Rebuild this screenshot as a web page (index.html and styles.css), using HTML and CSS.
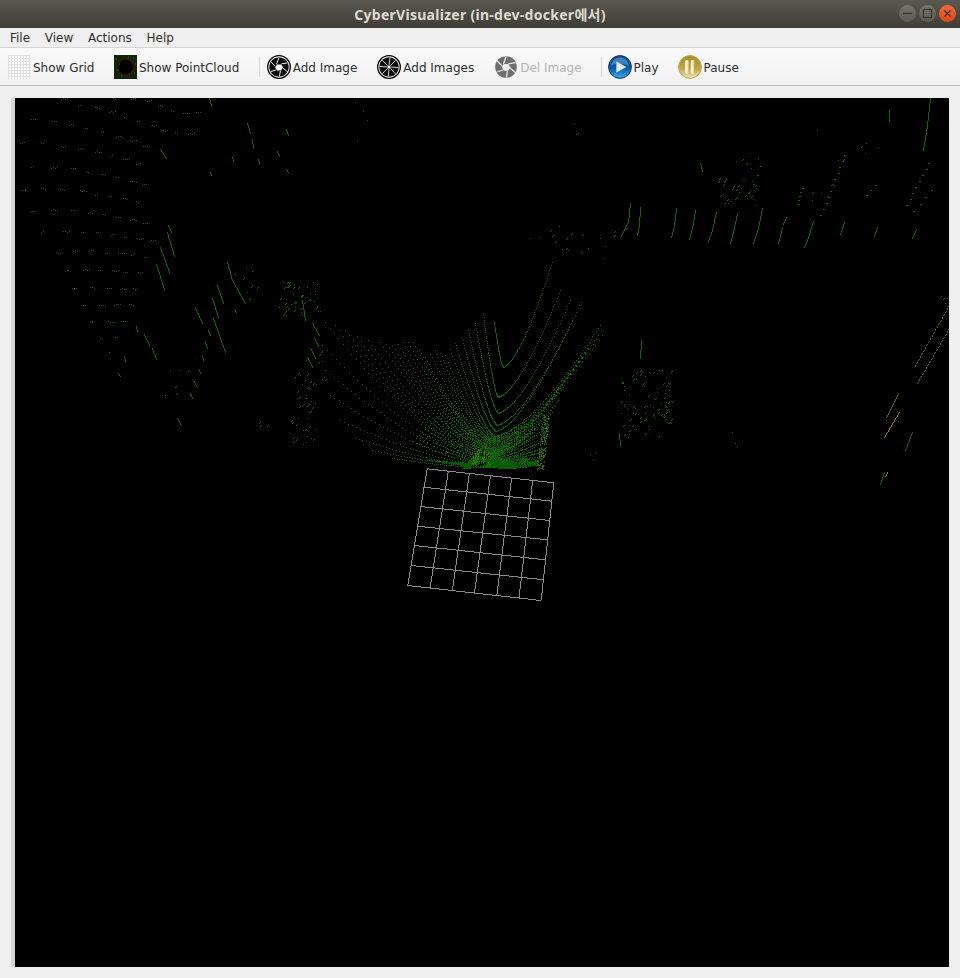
FILE: index.html
```html
<!DOCTYPE html>
<html lang="en">
<head>
    <meta charset="UTF-8">
    <title>CyberVisualizer</title>
    <link rel="stylesheet" href="styles.css">
</head>
<body>
    <div class="titlebar">
        <span class="title">CyberVisualizer (in-dev-docker에서)</span>
        <div class="window-buttons">
            <span class="win-btn">
                <svg width="17" height="17" viewBox="0 0 17 17"><path d="M4 8.5h9" stroke="#35342f" stroke-width="1.2"/></svg>
            </span>
            <span class="win-btn">
                <svg width="17" height="17" viewBox="0 0 17 17"><rect x="4.5" y="4.5" width="8" height="8" fill="none" stroke="#35342f" stroke-width="1.1"/></svg>
            </span>
            <span class="win-btn close">
                <svg width="17" height="17" viewBox="0 0 17 17"><path d="M5.5 5.5l6 6M11.5 5.5l-6 6" stroke="#3a2418" stroke-width="1.2"/></svg>
            </span>
        </div>
    </div>

    <div class="menubar">
        <span class="menu-item">File</span>
        <span class="menu-item">View</span>
        <span class="menu-item">Actions</span>
        <span class="menu-item">Help</span>
    </div>

    <div class="toolbar">
        <div class="tool first">
            <svg class="icon narrow" width="23" height="24" viewBox="0 0 23 24">
                <defs>
                    <pattern id="gridcell" width="3" height="3" patternUnits="userSpaceOnUse">
                        <rect width="3" height="3" fill="#fbfbfb"/>
                        <path d="M0 .5h3M.5 0v3" stroke="#e0e0e0" stroke-width="1"/>
                    </pattern>
                </defs>
                <rect width="23" height="24" fill="url(#gridcell)"/>
            </svg>
            <span>Show Grid</span>
        </div>
        <div class="tool">
            <svg class="icon narrow" width="23" height="24" viewBox="0 0 23 24">
                <defs>
                    <radialGradient id="cloud">
                        <stop offset="0" stop-color="#000"/>
                        <stop offset=".42" stop-color="#000"/>
                        <stop offset=".55" stop-color="#2e1c08"/>
                        <stop offset=".75" stop-color="#0c2408"/>
                        <stop offset="1" stop-color="#0c2a0a"/>
                    </radialGradient>
                </defs>
                <rect width="23" height="24" fill="#0a1c08"/>
                <circle cx="11.5" cy="12" r="15" fill="url(#cloud)"/>
                <path d="M2 4h1M5 9h1M3 15h1M19 3h1M21 9h1M20 18h1M7 21h1M14 2h1" stroke="#2c6a20" stroke-width="1"/>
            </svg>
            <span>Show PointCloud</span>
        </div>
        <div class="tool-sep first"></div>
        <div class="tool">
            <svg class="icon" width="24" height="24" viewBox="0 0 24 24">
                <circle cx="12" cy="12" r="11.3" fill="#fff" stroke="#000" stroke-width="1.3"/>
                <circle cx="12" cy="12" r="9.8" fill="#0c0c0c"/>
                <path d="M9.5 9L12 2.6M14.5 8.8L20.5 8M16 13L21 17.2M13.4 16L12.4 21.4M9 15L3.6 16.6M8.2 11L3.8 6.8" stroke="#fff" stroke-width=".9" fill="none"/>
                <path d="M9.8 9.4h4.4l1.8 3-2 3H10l-1.8-3z" fill="#fff"/>
            </svg>
            <span>Add Image</span>
        </div>
        <div class="tool">
            <svg class="icon" width="24" height="24" viewBox="0 0 24 24">
                <circle cx="12" cy="12" r="11.3" fill="#fff" stroke="#000" stroke-width="1.3"/>
                <circle cx="12" cy="12" r="9.8" fill="#0c0c0c"/>
                <path d="M12 10.5L13 2.5M13.2 10.9L18.7 5.2M13.5 12L21.5 12.6M13 13.1L18.6 18.8M12 13.5L11.2 21.5M10.9 13.1L5.3 18.7M10.5 12L2.5 11.4M10.9 10.9L5.2 5.3" stroke="#fff" stroke-width=".8" fill="none"/>
                <circle cx="12" cy="12" r="1.3" fill="#fff"/>
            </svg>
            <span>Add Images</span>
        </div>
        <div class="tool disabled tight">
            <svg class="icon" width="24" height="24" viewBox="0 0 24 24">
                <circle cx="12" cy="12" r="10.8" fill="#6e6e6e"/>
                <path d="M9.5 9L12 1.5M14.5 8.8L21.5 7.6M16 13L22 18M13.4 16L12.4 22.5M9 15L2.6 17M8.2 11L3 5.8" stroke="#e6e6e6" stroke-width="1.3" fill="none"/>
                <path d="M9.6 9h4.8l2 3.4-2.2 3.4H9.8L7.8 12.2z" fill="#ececec"/>
            </svg>
            <span>Del Image</span>
        </div>
        <div class="tool-sep"></div>
        <div class="tool tight">
            <svg class="icon" width="24" height="24" viewBox="0 0 24 24">
                <defs>
                    <linearGradient id="playfill" x1="0" y1="0" x2="0" y2="1">
                        <stop offset="0" stop-color="#0a4a90"/>
                        <stop offset=".55" stop-color="#0b5aa6"/>
                        <stop offset="1" stop-color="#38b0e8"/>
                    </linearGradient>
                </defs>
                <circle cx="12" cy="12" r="11.4" fill="url(#playfill)" stroke="#16326e" stroke-width="1"/>
                <path d="M3 10.5C4 5 8 2.4 12 2.4s8 2.6 9 8.1c-5-2.4-13-2.4-18 0z" fill="#6fa8d8" opacity=".55"/>
                <path d="M8.4 6.4L18.4 12 8.4 17.6z" fill="#dcebf8"/>
            </svg>
            <span>Play</span>
        </div>
        <div class="tool">
            <svg class="icon" width="24" height="24" viewBox="0 0 24 24">
                <defs>
                    <linearGradient id="pausefill" x1="0" y1="0" x2="0" y2="1">
                        <stop offset="0" stop-color="#a88e24"/>
                        <stop offset=".55" stop-color="#bda544"/>
                        <stop offset="1" stop-color="#efe6b8"/>
                    </linearGradient>
                    <linearGradient id="pausebar" x1="0" y1="0" x2="1" y2="0">
                        <stop offset="0" stop-color="#fffdf2"/>
                        <stop offset=".55" stop-color="#f2eac4"/>
                        <stop offset="1" stop-color="#b9a140"/>
                    </linearGradient>
                </defs>
                <circle cx="12" cy="12" r="11.4" fill="url(#pausefill)" stroke="#bfa94e" stroke-width="1"/>
                <rect x="7.2" y="5" width="4" height="14" rx="2" fill="url(#pausebar)"/>
                <rect x="12.8" y="5" width="4" height="14" rx="2" fill="url(#pausebar)"/>
            </svg>
            <span>Pause</span>
        </div>
    </div>

    <div class="content">
        <canvas id="view" width="934" height="869"></canvas>
    </div>

    <script src="script.js"></script>
</body>
</html>
```

FILE: styles.css
```css
html, body {
    margin: 0;
    padding: 0;
}
body {
    width: 960px;
    height: 978px;
    overflow: hidden;
    background-color: #efefef;
    font-family: "DejaVu Sans", sans-serif;
    font-size: 12px;
    color: #2e2e2e;
}
.titlebar {
    position: relative;
    height: 28px;
    display: flex;
    align-items: center;
    justify-content: center;
    background: linear-gradient(#5b5850, #3f3d37);
}
.title {
    font-family: "Noto Sans", "Noto Sans CJK KR", sans-serif;
    font-size: 14px;
    font-weight: 700;
    letter-spacing: .28px;
    color: #dfdbd2;
}
.window-buttons {
    position: absolute;
    top: 5px;
    right: 4px;
    display: flex;
    gap: 3px;
}
.win-btn {
    width: 17px;
    height: 17px;
    border-radius: 50%;
    background: linear-gradient(#74736c, #5a5953);
    display: block;
}
.win-btn svg {
    display: block;
}
.win-btn.close {
    background: linear-gradient(#f0693a, #dd4814);
}
.menubar {
    height: 19px;
    display: flex;
    align-items: center;
    padding-left: 10px;
    gap: 14.7px;
    background-color: #efefef;
    border-bottom: 1px solid #d6d6d6;
}
.toolbar {
    height: 36px;
    padding-top: 1px;
    display: flex;
    align-items: center;
    padding-left: 8px;
    background: linear-gradient(#f9f9f9, #f1f1f1);
    border-bottom: 1px solid #bcbcbc;
}
.tool {
    display: flex;
    align-items: center;
    gap: 2px;
    margin-right: 20px;
}
.tool span {
    margin-top: 2px;
}
.tool.first {
    margin-right: 19.6px;
}
.tool.tight {
    margin-right: 19px;
}
.tool.disabled {
    color: #b4b4b4;
}
.icon {
    display: block;
    flex: none;
}
.tool-sep {
    width: 1px;
    height: 20px;
    margin-right: 6px;
    background-color: #d8d8d8;
}
.tool-sep.first {
    margin-right: 6.4px;
}
.content {
    padding: 12px 11px 11px 11px;
}
#view {
    display: block;
    border-left: 4px solid #d6d6d6;
    background-color: #000;
}
```

FILE: script.js
```js
// point cloud + grid view, drawn pixel by pixel so the points stay hard edged
var canvas = document.getElementById('view');
var ctx = canvas.getContext('2d');
var OX = 15, OY = 98;

var GREEN = '#0d6a00';
var DARK = '#0a5c00';
var OLIVE = '#4f6a0c';
var ORANGE = '#a87a10';

var seed = 12345;
function rnd() {
    seed = (seed * 16807) % 2147483647;
    return seed / 2147483647;
}

function dot(x, y, color) {
    ctx.fillStyle = color || GREEN;
    ctx.fillRect(Math.round(x) - OX, Math.round(y) - OY, 1, 1);
}

function line(x0, y0, x1, y1, color, gapEvery) {
    var n = Math.max(Math.abs(x1 - x0), Math.abs(y1 - y0));
    for (var i = 0; i <= n; i++) {
        if (gapEvery && i % gapEvery === gapEvery - 1) continue;
        var t = n ? i / n : 0;
        dot(x0 + (x1 - x0) * t, y0 + (y1 - y0) * t, color);
    }
}

// main fan: vertex x, vertex y, left end x, y, right end x, y
var rings = [
    [503, 367, 494, 322, 552, 262],
    [498, 397, 483, 313, 560, 290],
    [498, 413, 475, 323, 570, 300],
    [497, 425, 468, 330, 581, 302],
    [496, 431, 462, 338, 572, 320],
    [495, 436, 455, 343, 600, 325],
    [495, 440, 445, 355, 602, 335],
    [494, 443, 435, 350, 590, 343],
    [493, 447, 425, 357, 585, 353],
    [493, 450, 413, 342, 578, 362],
    [492, 452, 403, 342, 568, 373],
    [492, 454, 392, 345, 558, 400],
    [491, 456, 380, 342, 552, 412],
    [490, 457, 368, 340, 548, 425],
    [490, 458, 357, 336, 545, 440],
    [489, 459, 345, 330, 544, 448],
    [488, 460, 335, 325, 543, 452],
    [488, 461, 325, 322, 542, 456],
    [487, 462, 322, 345, 541, 458],
    [486, 463, 325, 370, 540, 460],
    [486, 464, 330, 395, 538, 462],
    [485, 465, 340, 420, 536, 464],
    [484, 466, 355, 438, 534, 465],
    [482, 466, 372, 450, 530, 466],
    [480, 467, 392, 458, 526, 467]
];

function arm(vx, vy, ex, ey, n, color) {
    var cx = vx + (ex - vx) * 0.36;
    var cy = vy + (ey - vy) * 0.07;
    for (var k = 0; k <= n; k++) {
        var t = k / n;
        var x = (1 - t) * (1 - t) * vx + 2 * t * (1 - t) * cx + t * t * ex;
        var y = (1 - t) * (1 - t) * vy + 2 * t * (1 - t) * cy + t * t * ey;
        dot(x, y, color);
    }
}

rings.forEach(function (r, i) {
    arm(r[0], r[1], r[2], r[3], i < 6 ? 70 : 46, GREEN);
    arm(r[0], r[1], r[4], r[5], i < 6 ? 70 : 40, GREEN);
    // the steep middle rings are closer together, one more between each pair
    if (i >= 5 && i < 12) {
        var next = rings[i + 1];
        var m = r.map(function (v, j) {
            return (v + next[j]) / 2;
        });
        arm(m[0], m[1], m[2], m[3], 46, GREEN);
        arm(m[0], m[1], m[4], m[5], 40, GREEN);
    }
});

// short close rings that fill the bottom of the fan
for (var k = 0; k < 14; k++) {
    var ry = 438 + k * 2;
    arm(490, ry, 452 - k * 3, ry - 36 + k, 26, GREEN);
    arm(490, ry, 534, ry - 24 + k, 26, GREEN);
}

// solid mass of returns in front of the car
var blob = [
    [463, 464, 470], [468, 460, 478], [472, 456, 484], [486, 459, 498],
    [490, 461, 512], [498, 464, 516], [520, 458, 527], [528, 461, 537]
];
blob.forEach(function (b) {
    for (var y = b[1]; y < b[1] + 5; y++) {
        line(b[0], y, b[2], y, DARK);
    }
});
for (var d = 0; d < 5; d++) {
    line(428 + d * 8, 460 + d, 470, 463 + d / 2, DARK, 3);
}
for (var i = 0; i < 40; i++) {
    dot(470 + rnd() * 20, 451 + rnd() * 14, OLIVE);
}
line(478, 449, 473, 464, OLIVE);
line(480, 449, 475, 464, OLIVE);
line(485, 445, 483, 462, OLIVE);

// wall on the right of the fan, a slanted strip of points
for (var w = 0; w < 190; w++) {
    var wy = 415 + rnd() * 54;
    var wx = 537 + (468 - wy) * 0.1 + rnd() * 7;
    dot(wx, wy, rnd() > 0.45 ? OLIVE : GREEN);
}

// grid lying on the ground
var GRID = '#8c8c8c';
var gridLeft = [[426.7, 468.3], [423.3, 486.7], [420, 506], [417.3, 525.7], [414, 545], [410.7, 565], [407.3, 585]];
var gridRight = [[553.3, 482.3], [551.7, 500.7], [549.3, 520], [547.3, 539.3], [545, 559.3], [543.3, 579.3], [540.7, 600]];
for (var r = 0; r <= 6; r++) {
    line(gridLeft[r][0], gridLeft[r][1], gridRight[r][0], gridRight[r][1], GRID);
}
for (var q = 0; q <= 6; q++) {
    var s = q / 6;
    line(gridLeft[0][0] + (gridRight[0][0] - gridLeft[0][0]) * s,
         gridLeft[0][1] + (gridRight[0][1] - gridLeft[0][1]) * s,
         gridLeft[6][0] + (gridRight[6][0] - gridLeft[6][0]) * s,
         gridLeft[6][1] + (gridRight[6][1] - gridLeft[6][1]) * s, GRID);
}

// strokes: walls and poles
var strokes = [
    [167, 232, 174, 256], [160, 247, 169, 272], [156, 264, 164, 289],
    [217, 285, 223, 303], [212, 298, 218, 317], [213, 318, 225, 352],
    [195, 307, 202, 323], [227, 262, 232, 280], [232, 280, 245, 303],
    [144, 334, 149, 345], [152, 348, 156, 359], [247, 123, 250, 133],
    [252, 139, 253, 148], [136, 326, 137, 331], [124, 357, 125, 361],
    [118, 373, 120, 376], [190, 393, 192, 398], [193, 380, 197, 387],
    [198, 369, 200, 373], [202, 355, 203, 360], [205, 342, 207, 348],
    [208, 330, 210, 335], [234, 309, 236, 312], [177, 418, 181, 425],
    [160, 149, 166, 158], [209, 98, 211, 106], [277, 151, 279, 156],
    [286, 129, 288, 135], [232, 157, 233, 161], [258, 159, 259, 163],
    [286, 169, 288, 172], [210, 172, 211, 175], [302, 300, 305, 320],
    [312, 323, 319, 335], [314, 337, 318, 346], [310, 348, 315, 357],
    [307, 357, 312, 367], [168, 225, 171, 232],
    [630, 203, 628, 222], [628, 222, 620, 237], [640, 207, 639, 225],
    [639, 225, 637, 235], [676, 208, 674, 225], [674, 225, 671, 237],
    [695, 210, 692, 228], [692, 228, 689, 239], [716, 212, 712, 230],
    [712, 230, 708, 241], [737, 213, 733, 232], [733, 232, 730, 243],
    [762, 208, 758, 228], [758, 228, 753, 243], [813, 221, 807, 240],
    [807, 240, 804, 247], [844, 222, 840, 234], [877, 227, 874, 236],
    [916, 229, 912, 238], [930, 98, 927, 125], [927, 125, 923, 150],
    [889, 109, 889, 121], [700, 163, 702, 171], [641, 340, 640, 358],
    [786, 217, 783, 224], [782, 228, 778, 243], [912, 432, 905, 450],
    [884, 472, 880, 484], [619, 433, 620, 446]
];
strokes.forEach(function (l) {
    line(l[0], l[1], l[2], l[3], GREEN);
});
line(949, 305, 914, 367, OLIVE, 3);
line(949, 328, 917, 383, OLIVE, 3);
line(898, 394, 886, 417, OLIVE);
line(899, 412, 884, 437, ORANGE);
line(887, 472, 885, 476, ORANGE);

// sparse diagonal runs of points in the upper right
var runs = [
    [843, 155, 820, 215, 6], [928, 163, 903, 209, 6], [875, 185, 865, 195, 5],
    [801, 188, 795, 207, 4], [760, 166, 745, 200, 9], [930, 190, 912, 212, 7]
];
runs.forEach(function (l) {
    var n = Math.max(Math.abs(l[2] - l[0]), Math.abs(l[3] - l[1]));
    for (var i = 0; i <= n; i += l[4]) {
        var x = l[0] + (l[2] - l[0]) * i / n + rnd() * 2;
        var y = l[1] + (l[3] - l[1]) * i / n;
        dot(x, y, GREEN);
        dot(x + 1, y, GREEN);
    }
});

// rows of short dashes at far left, x y in screen pixels
var rows = [
    [[63, 98], [80, 105], [97, 107], [111, 111], [126, 117], [139, 120], [152, 125], [163, 130], [177, 132], [190, 133]],
    [[115, 98], [133, 98], [147, 100], [160, 105], [173, 110], [185, 112], [198, 112]],
    [[33, 118], [54, 121], [71, 124], [87, 127], [103, 131], [118, 136], [132, 140], [145, 145]],
    [[22, 142], [43, 142], [63, 146], [80, 148], [97, 151], [112, 155], [125, 159], [138, 163]],
    [[33, 166], [53, 167], [73, 168], [88, 171], [103, 174], [118, 177], [132, 181], [144, 184]],
    [[23, 189], [43, 188], [62, 189], [82, 190], [97, 194], [111, 196], [125, 198], [138, 201]],
    [[32, 210], [53, 209], [73, 210], [90, 212], [105, 214], [118, 217], [132, 219], [145, 222]],
    [[43, 231], [65, 231], [83, 231], [98, 232], [112, 234], [126, 236], [139, 238], [151, 240]],
    [[58, 252], [75, 250], [91, 250], [107, 252], [120, 253], [133, 254], [146, 256]],
    [[67, 270], [85, 269], [100, 270], [114, 270], [127, 272], [140, 272]],
    [[74, 288], [92, 287], [107, 287], [122, 288], [135, 288]],
    [[83, 305], [101, 305], [116, 304], [131, 304]],
    [[92, 322], [110, 321], [123, 320]],
    [[102, 338], [117, 336]]
];
rows.forEach(function (row) {
    row.forEach(function (p) {
        var n = 2 + Math.floor(rnd() * 3);
        for (var i = 0; i < n; i++) {
            dot(p[0] - 2 + i * 2, p[1] + Math.round(rnd()), GREEN);
        }
    });
});
dot(68, 270, '#a04a10'); dot(25, 189, '#8a5010'); dot(165, 395, '#c04010');
dot(74, 288, '#5a8a10'); dot(83, 305, '#18a000'); dot(92, 321, '#18a000'); dot(109, 352, '#18a000');

// scattered clusters: x, y, w, h, count
var clusters = [
    [620, 370, 52, 56, 85], [622, 425, 40, 12, 10],
    [718, 178, 40, 28, 30], [735, 150, 25, 20, 6],
    [776, 180, 60, 20, 5], [840, 140, 40, 20, 5],
    [280, 282, 40, 34, 38], [292, 372, 22, 36, 18],
    [290, 395, 28, 50, 28], [305, 345, 20, 40, 12],
    [270, 300, 30, 10, 6], [228, 260, 30, 40, 8],
    [255, 420, 12, 6, 3], [165, 368, 25, 30, 6],
    [940, 295, 9, 20, 4], [540, 225, 60, 40, 12],
    [600, 220, 30, 30, 4]
];
clusters.forEach(function (c) {
    for (var i = 0; i < c[4]; i++) {
        var x = c[0] + rnd() * c[2];
        var y = c[1] + rnd() * c[3];
        dot(x, y, GREEN);
        if (rnd() > 0.5) dot(x + 1, y - 1, GREEN);
    }
});

// single stray points
var strays = [
    [355, 102], [367, 120], [357, 140], [576, 134], [574, 124], [578, 133], [363, 111],
    [732, 432], [737, 447], [735, 443], [603, 258], [540, 237], [530, 238], [817, 130],
    [838, 160], [593, 460], [596, 452], [590, 455], [600, 238]
];
strays.forEach(function (p) {
    dot(p[0], p[1], GREEN);
});
```
